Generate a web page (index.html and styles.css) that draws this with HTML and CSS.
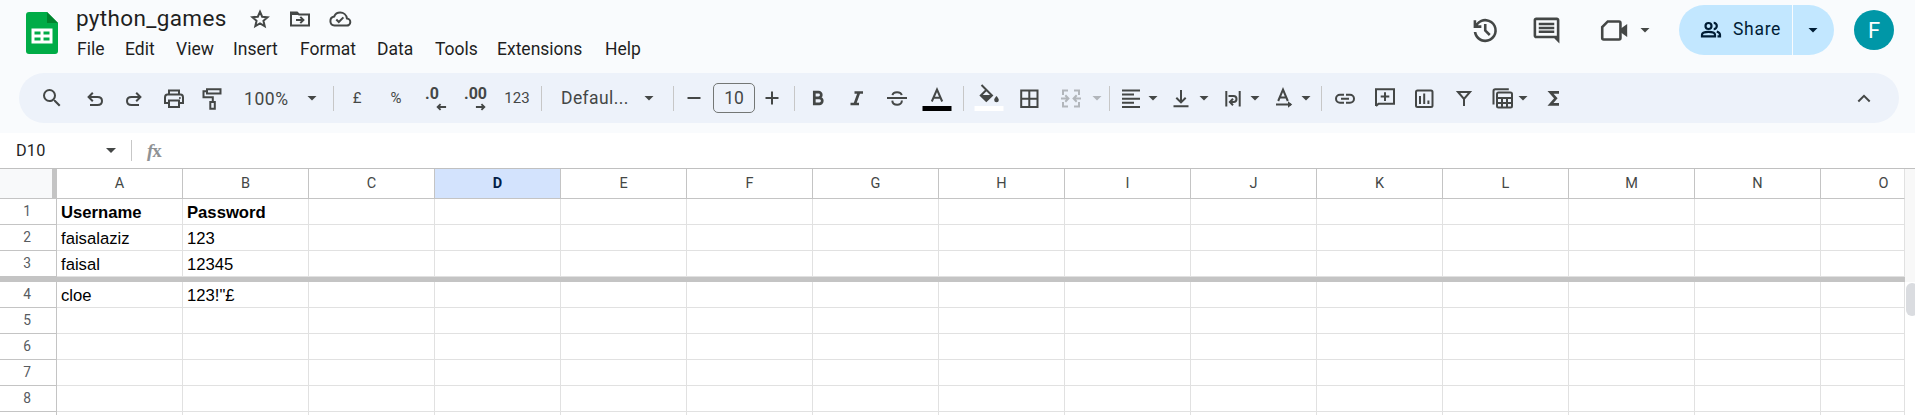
FILE: index.html
```html
<!DOCTYPE html>
<html lang="en">
<head>
<meta charset="utf-8">
<title>python_games</title>
<link rel="stylesheet" href="styles.css">
</head>
<body>
<header class="top">
  <svg class="logo" viewBox="0 0 32 42"><path fill="#00ac47" d="M3 0h18l11 11v28a3 3 0 0 1-3 3H3a3 3 0 0 1-3-3V3a3 3 0 0 1 3-3z"/><path fill="#00832d" d="M21 0l11 11H21z"/><path fill="#fff" fill-rule="evenodd" d="M5.500 16.500h21v15h-21zM8.500 19.500v3h6v-3zM17.500 19.500v3h6v-3zM8.500 25.500v3h6v-3zM17.500 25.500v3h6v-3z"/></svg>
  <div class="doc">
    <div class="titlebar">
      <span class="title">python_games</span>
      <svg class="ic star" viewBox="0 0 24 24"><path class="s" stroke-width="1.800" stroke-linejoin="miter" d="M12 4.700l2.150 5 5.400.5-4.100 3.600 1.250 5.300L12 16.300l-4.700 2.800 1.250-5.300-4.100-3.600 5.400-.5z"/></svg>
      <svg class="ic folder" viewBox="0 0 24 24"><path class="s" d="M3 18.500v-13h6l2 2h10v11H3z"/><path d="M2.500 5h6.500l2 3H2.500z"/><path class="s" d="M8 13h7M12.300 9.900l3.100 3.100-3.100 3.100"/></svg>
      <svg class="ic cloud" viewBox="0 0 24 24"><path class="s" stroke-width="1.900" d="M6.500 18.600h12a3.600 3.600 0 0 0 .4-7.200C18.500 8 15.600 5.600 12.200 5.600c-2.700 0-4.900 1.400-6 3.900a4.600 4.600 0 0 0 .3 9.100z"/><path class="s" d="M8.300 12.500l2.500 2.500 4.600-4.600"/></svg>
    </div>
    <nav class="menu"><span>File</span><span>Edit</span><span>View</span><span>Insert</span><span>Format</span><span>Data</span><span>Tools</span><span>Extensions</span><span>Help</span></nav>
  </div>
  <div class="actions">
    <svg class="big" viewBox="0 0 24 24"><path d="M12 21c-4.600 0-8.400-3.400-8.900-7.900h2.030A7 7 0 1 0 6.260 8H9v2H3V4h2v2.350A9 9 0 1 1 12 21zm2.800-4.800L11 12.400V7h2v4.600l3.200 3.200z" transform="translate(-.2 0)"/></svg>
    <svg class="big comment" viewBox="0 0 24 24"><path d="M22 4c0-1.100-.9-2-2-2H4c-1.100 0-2 .9-2 2v12c0 1.100.9 2 2 2h14l4 4V4zm-2 12H4V4h16zM6 12h12v2H6zm0-3h12v2H6zm0-3h12v2H6z"/></svg>
    <svg class="big video" viewBox="0 0 24 24"><path class="s" d="M6.800 5h8.700q1.100 0 1.100 1.100v11.800q0 1.100-1.100 1.100H3.600q-1.100 0-1.100-1.100V9.300z"/><path d="M17 10.500L21.800 7v10L17 13.500z"/></svg>
    <i class="caret video-caret"></i>
    <div class="share"><div class="share-main"><svg class="ic" viewBox="0 0 24 24"><g fill="none" stroke="#001d35" stroke-width="2.200"><circle cx="9.500" cy="8" r="3"/><path d="M3 18.300v-1.500c0-3.800 13-3.800 13 0v1.500zM14.700 4.900a3.100 3.100 0 0 1 0 6.200M17.800 13.500c2.200.8 3.200 1.700 3.200 3.300v1.500h-2.500"/></g></svg><span>Share</span></div><div class="share-more"><i class="caret"></i></div></div>
    <div class="avatar">F</div>
  </div>
</header>

<div class="toolbar">
  <svg class="ic search" viewBox="0 0 24 24"><path d="M15.500 14h-.79l-.28-.27A6.470 6.470 0 0 0 16 9.500 6.500 6.500 0 1 0 9.500 16c1.610 0 3.090-.59 4.230-1.570l.27.280v.79l5 4.990L20.490 19zm-6 0C7.010 14 5 11.990 5 9.500S7.010 5 9.500 5 14 7.010 14 9.500 11.990 14 9.500 14z"/></svg>
  <svg class="ic undo" viewBox="0 0 24 24"><path class="s" d="M7 19h7.500c2.700 0 4.500-1.700 4.500-4s-1.800-4-4.500-4H6M9.800 6.800L5.600 11l4.200 4.200"/></svg>
  <svg class="ic redo" viewBox="0 0 24 24"><path class="s" d="M17 19H9.500C6.800 19 5 17.300 5 15s1.800-4 4.500-4H18M14.200 6.800l4.200 4.200-4.200 4.200"/></svg>
  <svg class="ic print" viewBox="0 0 24 24"><path class="s" d="M7 8.500v-4h10v4M7 17H3v-5.500c0-2 1-3 2.500-3h13c1.500 0 2.500 1 2.500 3V17h-4M7 14.500h10V21H7z"/><circle cx="17.900" cy="12" r="1"/></svg>
  <svg class="ic paint" viewBox="0 0 24 24"><path class="s" d="M7 3.300h13.500v4.200H7zM7 5.300H3.500v5.900h9.300v4.500M10.300 16h4.500v6.800h-4.500z"/></svg>
  <span class="txt zoom">100%</span><i class="caret zoom-caret"></i>
  <i class="sep s1"></i>
  <span class="txt small pound">£</span><span class="txt small pct">%</span>
  <span class="dec dec1">.0<svg viewBox="0 0 12 8"><path class="s" d="M2 4h9M5 .8L1.800 4 5 7.200"/></svg></span>
  <span class="dec dec2">.00<svg viewBox="0 0 12 8"><path class="s" d="M1 4h9M7 .8L10.200 4 7 7.200"/></svg></span>
  <span class="txt small num">123</span>
  <i class="sep s2"></i>
  <span class="txt font">Defaul...</span><i class="caret font-caret"></i>
  <i class="sep s3"></i>
  <svg class="ic minus" viewBox="0 0 24 24"><path class="s" d="M5.500 12h13"/></svg>
  <span class="size">10</span>
  <svg class="ic plus" viewBox="0 0 24 24"><path class="s" d="M5.500 12h13M12 5.500v13"/></svg>
  <i class="sep s4"></i>
  <svg class="ic bold" viewBox="0 0 24 24"><path class="s heavy" d="M8.300 6.200h4.200a2.800 2.800 0 0 1 0 5.600H8.300zM8.300 11.800h5a3 3 0 0 1 0 6H8.300z"/></svg>
  <svg class="ic ital" viewBox="0 0 24 24"><path class="s heavy" d="M9.500 6.500h8.500M5.500 18H14M14 6.500L9.800 18"/></svg>
  <svg class="ic strike" viewBox="0 0 24 24"><path class="s" d="M2 12h20M7.500 9.200c.5-4.100 8.500-4.100 9.200 0M7.300 14.600c.3 5.600 9.600 5.600 9.600 0"/></svg>
  <svg class="ic tcolor" viewBox="0 0 24 24"><path class="s" d="M6.800 15.500L12 3.600l5.200 11.900M8.300 11.800h7.400"/><path fill="#000" d="M-2.500 20h29v5h-29z"/></svg>
  <i class="sep s5"></i>
  <svg class="ic fill" viewBox="0 0 24 24"><path class="s" d="M4.500-1l10.500 10.500-5.700 5.300-5.500-5.300 6-6"/><path d="M3.500 9h11.500l-5.700 6zM19.500 10s-2.300 2.500-2.300 3.900a2.300 2.300 0 0 0 4.600 0c0-1.400-2.300-3.900-2.300-3.900z"/><path fill="#fff" d="M-2.500 20h29v5h-29z"/></svg>
  <svg class="ic borders" viewBox="0 0 24 24"><path class="s" d="M4.200 4.500h16.300v16.500H4.200zM12.300 4.500V21M4.200 12.700h16.300"/></svg>
  <svg class="ic merge off" viewBox="0 0 24 24"><path class="s" d="M9 4.500H4V9M4 16v4.500h5M15 4.500h5V9M20 16v4.500h-5M2 12.500h7M6.300 9.300l3.100 3.200-3.100 3.200M22 12.500h-7M17.700 9.300l-3.100 3.200 3.100 3.200"/></svg><i class="caret off merge-caret"></i>
  <i class="sep s6"></i>
  <svg class="ic align" viewBox="0 0 24 24"><path class="s" d="M3 4.500h18M3 8.600h12M3 12.700h18M3 16.800h12M3 20.900h18"/></svg><i class="caret align-caret"></i>
  <svg class="ic valign" viewBox="0 0 24 24"><path class="s" d="M12 4v12M7.300 11.700L12 16.400l4.700-4.700M4.500 20.300h15"/></svg><i class="caret valign-caret"></i>
  <svg class="ic wrap" viewBox="0 0 24 24"><path class="s" d="M5.300 5v15.500M18.700 5v15.500M7.500 10h5a3 3 0 0 1 0 6H9.500M12 12.800L8.900 16l3.100 3.200"/></svg><i class="caret wrap-caret"></i>
  <svg class="ic rotate" viewBox="0 0 24 24"><path class="s" d="M6.200 15L11 3.500 15.800 15M7.500 11.500h7M4 18.500h15"/><path d="M16 15.300l4.200 3.200-4.200 3.200z"/></svg><i class="caret rotate-caret"></i>
  <i class="sep s7"></i>
  <svg class="ic link" viewBox="0 0 24 24"><path class="s" d="M11 8.700H7a4 4 0 0 0 0 8h4M13 8.700h4a4 4 0 0 1 0 8h-4M8 12.700h8"/></svg>
  <svg class="ic addc" viewBox="0 0 24 24"><path class="s" d="M3 20V3.200h18v14.500H5.500L3 20M12 6.300v8.600M7.700 10.600h8.600"/></svg>
  <svg class="ic chart" viewBox="0 0 24 24"><rect class="s" x="4" y="4.500" width="16.500" height="16.500" rx="1.500"/><path class="s" d="M8 10v8M12.200 7.500V18M16.400 14.500V18"/></svg>
  <svg class="ic filter" viewBox="0 0 24 24"><path class="s" d="M6 6h12l-6 7zM12 12v8"/></svg>
  <svg class="ic table" viewBox="0 0 24 24"><rect class="s" x="6" y="6.500" width="15" height="15" rx="1.500"/><path class="s" d="M2.500 18.500V5q0-1.800 1.800-1.800h13.500"/><path class="s" d="M6 12h15M6 17h15M11 12v9.500M16 12v9.500"/></svg><i class="caret table-caret"></i>
  <svg class="ic sigma" viewBox="0 0 24 24"><path class="s heavy" d="M17 6.300H8.500l5.300 6-5.300 6H17"/></svg>
  <svg class="ic chev" viewBox="0 0 24 24"><path class="s" d="M6.300 15.500L12 9.800l5.700 5.700"/></svg>
</div>

<div class="formula"><span class="name">D10</span><i class="caret"></i><i class="fsep"></i><span class="fx">f<span>x</span></span></div>

<main class="sheet">
  <div class="grid">
    <div class="row head"><b class="corner"></b><b>A</b><b>B</b><b>C</b><b class="sel">D</b><b>E</b><b>F</b><b>G</b><b>H</b><b>I</b><b>J</b><b>K</b><b>L</b><b>M</b><b>N</b><b class="last">O</b></div>
    <div class="row bold-row"><b>1</b><p>Username</p><p>Password</p><p></p><p></p><p></p><p></p><p></p><p></p><p></p><p></p><p></p><p></p><p></p><p></p><p></p></div>
    <div class="row"><b>2</b><p>faisalaziz</p><p>123</p><p></p><p></p><p></p><p></p><p></p><p></p><p></p><p></p><p></p><p></p><p></p><p></p><p></p></div>
    <div class="row"><b>3</b><p>faisal</p><p>12345</p><p></p><p></p><p></p><p></p><p></p><p></p><p></p><p></p><p></p><p></p><p></p><p></p><p></p></div>
    <div class="freeze"></div>
    <div class="row"><b>4</b><p>cloe</p><p>123!"£</p><p></p><p></p><p></p><p></p><p></p><p></p><p></p><p></p><p></p><p></p><p></p><p></p><p></p></div>
    <div class="row"><b>5</b><p></p><p></p><p></p><p></p><p></p><p></p><p></p><p></p><p></p><p></p><p></p><p></p><p></p><p></p><p></p></div>
    <div class="row"><b>6</b><p></p><p></p><p></p><p></p><p></p><p></p><p></p><p></p><p></p><p></p><p></p><p></p><p></p><p></p><p></p></div>
    <div class="row"><b>7</b><p></p><p></p><p></p><p></p><p></p><p></p><p></p><p></p><p></p><p></p><p></p><p></p><p></p><p></p><p></p></div>
    <div class="row"><b>8</b><p></p><p></p><p></p><p></p><p></p><p></p><p></p><p></p><p></p><p></p><p></p><p></p><p></p><p></p><p></p></div>
    <div class="row cut"><b></b><p></p><p></p><p></p><p></p><p></p><p></p><p></p><p></p><p></p><p></p><p></p><p></p><p></p><p></p><p></p></div>
  </div>
  <div class="scroll"><div class="track"></div><div class="thumb"></div></div>
</main>
</body>
</html>
```
FILE: styles.css
```css
* { box-sizing: border-box; }
html, body { margin: 0; height: 415px; overflow: hidden; }
body {
  background: #f9fbfd;
  color: #1f1f1f;
  font-family: Roboto, "Liberation Sans", sans-serif;
}
svg { display: block; flex: none; overflow: visible; fill: #444746; }
.s { fill: none; stroke: #444746; stroke-width: 2; }
.heavy { stroke-width: 2.700; }
.ic { width: 24px; height: 24px; }
.caret {
  flex: none;
  width: 10px;
  height: 5px;
  background: #444746;
  clip-path: polygon(0 0, 100% 0, 50% 100%);
}

/* title, menus and actions */
.top { display: flex; height: 73px; padding-left: 26px; }
.logo { width: 32px; height: 42px; margin-top: 12px; }
.doc { flex: none; padding-left: 18px; width: 700px; }
.titlebar { display: flex; height: 38px; align-items: center; }
.title { width: 170px; padding-bottom: 2px; font-size: 22.500px; line-height: 36px; letter-spacing: 0.35px; white-space: nowrap; }
.star { margin-left: 2px; }
.folder { margin-left: 16px; }
.cloud { margin-left: 16px; }
.menu {
  display: grid;
  grid-template-columns: 48px 51px 57px 67px 77px 58px 62px 108px 60px;
  padding-left: 1px;
  font-size: 17.500px;
  line-height: 22px;
}
.menu span { white-space: nowrap; }
.actions { display: flex; flex: 1; height: 60px; align-items: center; margin-left: 712px; }
.big { width: 31px; height: 31px; }
.comment { margin-left: 30px; }
.video { margin-left: 37px; }
.video-caret { margin-left: 10px; }
.share { display: flex; flex: none; width: 155px; height: 50px; margin-left: 29px; border-radius: 25px; overflow: hidden; color: #001d35; }
.share-main { display: flex; align-items: center; width: 113px; padding-left: 20px; background: #c2e7ff; font-size: 17.500px; letter-spacing: 0.7px; }
.share-main span { margin-left: 10px; padding-bottom: 2px; }
.share-more { display: flex; align-items: center; flex: 1; margin-left: 1px; padding-left: 15px; background: #c2e7ff; }
.share-more .caret { background: #001d35; }
.avatar { flex: none; width: 40px; height: 40px; margin-left: 20px; border-radius: 50%; background: #0097a7; color: #fff; font-size: 22px; line-height: 42px; text-align: center; }

/* toolbar */
.toolbar { display: flex; align-items: center; width: 1880px; height: 50px; margin-left: 19px; border-radius: 25px; background: #edf2fa; color: #444746; }
.sep { flex: none; width: 1px; height: 25px; background: #c7c7c7; }
.txt { flex: none; font-size: 17.500px; white-space: nowrap; }
.small { font-size: 15px; text-align: center; }
.search { margin-left: 21px; }
.undo { margin-left: 19px; }
.redo { margin-left: 15px; }
.print { margin-left: 16px; }
.paint { margin-left: 14px; }
.zoom { width: 46px; margin-left: 20px; padding-top: 1px; letter-spacing: 0.6px; }
.zoom-caret { margin-left: 17px; }
.s1 { margin-left: 16px; }
.pound { width: 20px; margin-left: 13px; }
.pct { width: 20px; margin-left: 19px; }
.dec { flex: none; width: 26px; height: 24px; font-size: 16px; font-weight: 700; line-height: 16px; }
.dec svg { width: 11px; height: 8px; margin: 1px 0 0 11px; }
.dec1 { margin-left: 19px; }
.dec2 { margin-left: 13px; }
.num { width: 26px; margin-left: 14px; }
.s2 { margin-left: 11px; }
.font { width: 67px; margin-left: 19px; letter-spacing: 0.4px; }
.font-caret { margin-left: 16px; }
.s3 { margin-left: 19px; }
.minus { margin-left: 8px; }
.size { flex: none; width: 42px; height: 30px; margin-left: 7px; border: 1px solid #747775; border-radius: 5px; font-size: 17.500px; line-height: 29px; text-align: center; }
.plus { margin-left: 5px; }
.s4 { margin-left: 10px; }
.bold { margin-left: 11px; }
.ital { margin-left: 15px; }
.strike { margin-left: 16px; }
.tcolor { margin-left: 16px; }
.s5 { margin-left: 14px; }
.fill { margin-left: 13px; }
.borders { margin-left: 16px; }
.merge { margin-left: 18px; }
.off { opacity: 0.35; }
.merge-caret { margin-left: 9px; }
.s6 { margin-left: 7px; }
.align { margin-left: 9px; }
.align-caret { margin-left: 5px; }
.valign { margin-left: 11px; }
.valign-caret { margin-left: 6px; }
.wrap { margin-left: 12px; }
.wrap-caret { margin-left: 5px; }
.rotate { margin-left: 12px; }
.rotate-caret { margin-left: 5px; }
.s7 { margin-left: 10px; }
.link { margin-left: 11px; }
.addc { margin-left: 16px; }
.chart { margin-left: 15px; }
.filter { margin-left: 16px; }
.table { margin-left: 15px; }
.table-caret { margin-left: 3px; }
.sigma { margin-left: 14px; }
.chev { margin-left: 286px; }

/* name box and formula bar */
.formula { display: flex; align-items: center; height: 36px; margin-top: 10px; padding-left: 16px; border-bottom: 1px solid #c0c0c0; background: #fff; }
.name { width: 90px; font-size: 16.250px; letter-spacing: 0.2px; }
.fsep { width: 1px; height: 21px; margin-left: 15px; background: #c7c7c7; }
.fx { margin-left: 15px; color: #8f9295; font: italic 700 19px/30px "Liberation Serif", serif; letter-spacing: -1px; }
.fx span { font-style: normal; }

/* spreadsheet */
.sheet { display: flex; height: 246px; overflow: hidden; background: #fff; }
.grid { width: 1905px; flex: none; }
.row { display: grid; grid-template-columns: 57px repeat(14, 126px) 84px; height: 26px; }
.row > b, .row > p { margin: 0; border-right: 1px solid #e1e1e1; border-bottom: 1px solid #e1e1e1; overflow: hidden; }
.row > b { border-color: #c4c4c4; color: #575b5f; font-size: 13.750px; font-weight: 400; line-height: 24px; text-align: center; padding-right: 2px; }
.row > p { padding: 2px 0 0 4px; color: #000; font: 16.670px/23px "Liberation Sans", Arial, sans-serif; white-space: nowrap; }
.row.bold-row > p { font-weight: 700; }
.row.cut { height: 3px; }
.row.cut > b, .row.cut > p { padding: 0; border-bottom: 0; }
.row.head { height: 30px; }
.row.head > b { line-height: 30px; padding: 0; color: #444746; font-size: 14.500px; }
.row.head > .corner { border-right: 5px solid #c4c4c4; background: #f8f9fa; }
.row.head > .sel { background: #d3e3fd; color: #041e49; font-weight: 700; }
.row.head > .last { padding-left: 42px; border-right-color: #e1e1e1; }
.freeze { height: 5px; background: #c4c4c4; }
.scroll { width: 10px; overflow: hidden; }
.track { height: 113px; background: #f8f8f8; }
.thumb { width: 12px; height: 33px; margin: 1px 0 0 1px; border-radius: 6px; background: #dadce0; }
```
